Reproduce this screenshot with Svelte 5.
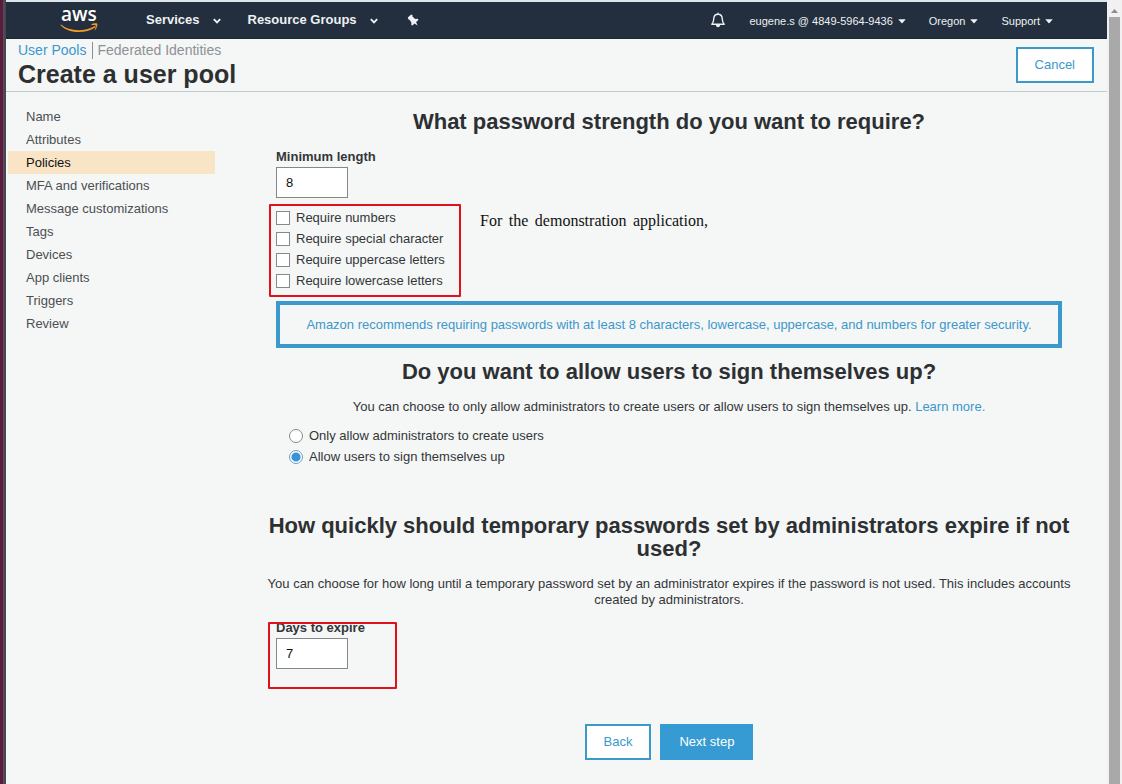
<script>
  const steps = [
    'Name', 'Attributes', 'Policies', 'MFA and verifications', 'Message customizations',
    'Tags', 'Devices', 'App clients', 'Triggers', 'Review'
  ];
  const current = 'Policies';

  let minLength = $state('8');
  let expireDays = $state('7');
  let signup = $state('users');
  let rules = $state([
    { id: 'numbers', label: 'Require numbers', on: false },
    { id: 'special', label: 'Require special character', on: false },
    { id: 'upper', label: 'Require uppercase letters', on: false },
    { id: 'lower', label: 'Require lowercase letters', on: false }
  ]);
  const signupOptions = [
    { value: 'admins', label: 'Only allow administrators to create users' },
    { value: 'users', label: 'Allow users to sign themselves up' }
  ];
</script>

{#snippet chevron()}
  <svg class="chevron" viewBox="0 0 8 6" width="8" height="6" aria-hidden="true">
    <path d="M0.8 1.2 4 4.4 7.2 1.2" fill="none" stroke="currentColor" stroke-width="1.9" />
  </svg>
{/snippet}

{#snippet caret()}
  <svg class="caret" viewBox="0 0 8 5" width="8" height="5" aria-hidden="true">
    <path d="M0.4 0.6Q0.6 0.3 1 0.3H7Q7.4 0.3 7.6 0.6L4.5 4Q4 4.5 3.5 4Z" fill="currentColor" />
  </svg>
{/snippet}

<div class="window">
  <div class="edge"></div>
  <div class="app">
    <header class="topbar">
      <a class="logo" href="#home">
        <span class="wordmark">aws</span>
        <svg viewBox="0 15 40 10" width="40" height="10" aria-hidden="true">
          <path d="M1 16.6C9 23.4 24 24.2 34.4 18.2C35.2 17.8 35.8 18.8 35 19.4C25.4 26.2 8.6 25.4 0.8 17.4C0.3 16.8 0.6 16.3 1 16.6Z" fill="#f29a26" />
          <path d="M31.4 16.5C33.2 15.2 36.6 15.1 37.2 15.8C37.8 16.7 36.8 20.4 35.2 22C34.8 22.4 34.5 22.2 34.7 21.8C35.2 20.6 36.1 18 35.7 17.4C35.3 16.8 33 17 31.8 17.1C31.2 17.2 31 16.8 31.4 16.5Z" fill="#f29a26" />
        </svg>
      </a>
      <button class="menu services">Services {@render chevron()}</button>
      <button class="menu groups">Resource Groups {@render chevron()}</button>
      <button class="icon pin" aria-label="Pin shortcuts">
        <svg viewBox="0 0 12 12" width="12" height="12" aria-hidden="true">
          <path d="M0.8 3.6 4.2 0.5 5.6 1.3 5.4 2.4 8.2 5 10.9 4.8 11.4 6 9.1 8.1 10.6 11.6 7.5 9.6 5.5 11.4 4.3 10.9 4.4 8.4 2.2 5.4 1.2 5.2Z" fill="currentColor" />
        </svg>
      </button>
      <button class="icon bell" aria-label="Notifications">
        <svg viewBox="0 0 16 16" width="16" height="16" aria-hidden="true">
          <path d="M8 1.2V2.2M1.8 12.2C3.4 10.8 3.7 9.4 3.8 6.6C3.9 3.8 5.6 2.2 8 2.2S12.1 3.8 12.2 6.6C12.3 9.4 12.6 10.8 14.2 12.2Z" fill="none" stroke="currentColor" stroke-width="1.4" stroke-linejoin="round" stroke-linecap="round" />
          <path d="M5.8 13H10.2Q9.8 15.2 8 15.2T5.8 13Z" fill="currentColor" />
        </svg>
      </button>
      <div class="account">
        <button class="small">eugene.s @ 4849-5964-9436 {@render caret()}</button>
        <button class="small">Oregon {@render caret()}</button>
        <button class="small">Support {@render caret()}</button>
      </div>
    </header>

    <div class="titlebar">
      <div>
        <nav class="crumbs" aria-label="Sections">
          <a class="here" href="#pools">User Pools</a>
          <a class="other" href="#federated">Federated Identities</a>
        </nav>
        <h1>Create a user pool</h1>
      </div>
      <button class="btn">Cancel</button>
    </div>

    <div class="columns">
      <nav class="steps" aria-label="Steps">
        {#each steps as step}
          <a href="#step" class:active={step === current}>{step}</a>
        {/each}
      </nav>

      <main>
        <h2>What password strength do you want to require?</h2>
        <label class="field-label first" for="min-length">Minimum length</label>
        <input class="number" id="min-length" type="text" bind:value={minLength} />

        <div class="options">
          {#each rules as rule (rule.id)}
            <label class="option"><input type="checkbox" bind:checked={rule.on} />{rule.label}</label>
          {/each}
          <div class="mark rules-mark"></div>
          <p class="note">For the demonstration application,</p>
        </div>

        <p class="advice">Amazon recommends requiring passwords with at least 8 characters, lowercase, uppercase, and numbers for greater security.</p>

        <h2 class="signup-title">Do you want to allow users to sign themselves up?</h2>
        <p class="help">You can choose to only allow administrators to create users or allow users to sign themselves up. <a href="#learn">Learn more.</a></p>
        <div class="radios">
          {#each signupOptions as option}
            <label class="option"><input type="radio" name="signup" value={option.value} bind:group={signup} />{option.label}</label>
          {/each}
        </div>

        <h2 class="expire-title">How quickly should temporary passwords set by administrators expire if not used?</h2>
        <p class="help">You can choose for how long until a temporary password set by an administrator expires if the password is not used. This includes accounts created by administrators.</p>
        <div class="expire">
          <label class="field-label" for="expire-days">Days to expire</label>
          <input class="number" id="expire-days" type="text" bind:value={expireDays} />
          <div class="mark expire-mark"></div>
        </div>

        <div class="actions">
          <button class="btn">Back</button>
          <button class="btn primary">Next step</button>
        </div>
      </main>
    </div>
  </div>

  <div class="scroll" aria-hidden="true">
    <svg viewBox="0 0 11 15" width="11" height="15"><path d="M2 11 5.5 7 9 11Z" fill="#8d8d8d" /></svg>
    <div class="thumb"></div>
  </div>
</div>

<style>
  :global(body) {
    background: #f5f6f6;
  }
  .window {
    display: flex;
    min-height: 100vh;
    box-sizing: border-box;
    font: 13px/16px "Liberation Sans", Arial, sans-serif;
    color: #333638;
  }
  .window * {
    box-sizing: border-box;
  }
  h1, h2, p {
    margin: 0;
  }
  button, input {
    font: inherit;
  }
  a {
    color: #3b98cc;
    text-decoration: none;
  }
  .edge {
    flex: none;
    width: 6px;
    background: linear-gradient(90deg, #5c1a3c 3px, #55505a 3px, #40444a 6px);
  }
  .app {
    flex: 1;
    min-width: 0;
    border-top: 2px solid #dce6ea;
  }
  .topbar {
    display: flex;
    align-items: center;
    height: 37px;
    padding: 0 54px;
    background: #232f3e;
    border-bottom: 1px solid #1f2831;
    color: #eef1f3;
  }
  .topbar button {
    display: flex;
    align-items: center;
    padding: 0;
    border: 0;
    background: none;
    color: inherit;
    white-space: nowrap;
  }
  .logo {
    display: flex;
    flex-direction: column;
    align-self: flex-start;
  }
  .logo svg {
    margin-top: -3px;
  }
  .wordmark {
    padding-left: 1px;
    font: 600 19px/24px "Open Sans", sans-serif;
    color: #fff;
  }
  .menu {
    gap: 13px;
    font-weight: bold;
    font-size: 13px;
  }
  .topbar .menu {
    margin-bottom: 1px;
  }
  .chevron {
    margin-top: 3px;
  }
  .services {
    margin-left: 46px;
  }
  .groups {
    margin-left: 27px;
  }
  .pin {
    margin-left: 29px;
  }
  .bell {
    margin-left: auto;
  }
  .account {
    display: flex;
    gap: 23px;
    margin-left: 23px;
    padding-top: 2px;
    font-size: 11px;
  }
  .small {
    gap: 5px;
  }
  .titlebar {
    display: flex;
    justify-content: space-between;
    align-items: center;
    height: 53px;
    padding: 0 13px 0 12px;
    border-bottom: 1px solid #c0c8ca;
  }
  .crumbs {
    display: flex;
    font-size: 14px;
    line-height: 17px;
  }
  .crumbs .here {
    padding-right: 6px;
    border-right: 1px solid #8a9194;
  }
  .crumbs .other {
    padding-left: 4px;
    color: #8c9294;
  }
  h1 {
    font-size: 25px;
    line-height: 30px;
    color: #2d2f31;
  }
  .btn {
    height: 36px;
    padding: 0 17px;
    border: 2px solid #3b9acb;
    background: #fff;
    color: #3b98cc;
  }
  .primary {
    background: #359bd2;
    border-color: #359bd2;
    color: #fff;
  }
  .columns {
    display: flex;
    gap: 61px;
    padding: 0 45px 24px 2px;
  }
  .steps {
    flex: none;
    width: 207px;
    padding-top: 13px;
  }
  .steps a {
    display: block;
    padding-left: 18px;
    line-height: 23px;
    color: #4b4f52;
  }
  .steps a.active {
    background: #f9e4c6;
    color: #111;
  }
  main {
    flex: 1;
    min-width: 0;
    padding-top: 18px;
  }
  h2 {
    margin: 0 -10px;
    font-size: 22px;
    line-height: 23px;
    text-align: center;
    color: #2d3032;
  }
  .field-label {
    display: block;
    margin-bottom: 2px;
    font-weight: bold;
  }
  .first {
    margin-top: 16px;
  }
  .number {
    display: block;
    width: 72px;
    height: 31px;
    padding: 0 9px;
    border: 1px solid #84888a;
    background: #fff;
    color: #111;
  }
  .options {
    position: relative;
    margin-top: 9px;
  }
  .option {
    display: flex;
    align-items: center;
    width: max-content;
    height: 21px;
    gap: 6px;
  }
  .option input {
    appearance: none;
    width: 14px;
    height: 14px;
    margin: 0;
    border: 1px solid #85898c;
    background: #fff;
  }
  .option input[type="checkbox"]:checked {
    background: #3b98cc;
  }
  .option input[type="radio"] {
    border-radius: 50%;
  }
  .option input[type="radio"]:checked {
    border-color: #6f9fc4;
    background: radial-gradient(circle, #3793d6 4px, #fff 5px);
  }
  .mark {
    position: absolute;
    border: 2px solid #e0101c;
    border-radius: 1px;
    pointer-events: none;
  }
  .rules-mark {
    left: -7px;
    top: -3px;
    width: 192px;
    height: 93px;
  }
  .note {
    position: absolute;
    left: 204px;
    top: 4px;
    width: 228px;
    font: 16px/20px "Liberation Serif", "Times New Roman", serif;
    color: #111;
    text-align: justify;
    text-align-last: justify;
  }
  .advice {
    margin-top: 10px;
    padding: 11px;
    border: 4px solid #3b9acb;
    line-height: 17px;
    text-align: center;
    color: #3b98cc;
  }
  .signup-title {
    margin-top: 12px;
  }
  .help {
    margin: 16px -10px 0;
    text-align: center;
  }
  .radios {
    margin-top: 10px;
    padding-left: 13px;
  }
  .expire-title {
    margin-top: 47px;
  }
  .expire {
    position: relative;
    margin-top: 12px;
  }
  .expire-mark {
    left: -8px;
    top: 2px;
    width: 129px;
    height: 67px;
  }
  .actions {
    display: flex;
    justify-content: center;
    gap: 9px;
    margin-top: 55px;
  }
  .scroll {
    display: flex;
    flex-direction: column;
    flex: none;
    width: 15px;
    padding: 2px 2px 0;
    background: #f1f1f1;
  }
  .thumb {
    flex: 1;
    background: #a9a9a9;
  }
</style>
